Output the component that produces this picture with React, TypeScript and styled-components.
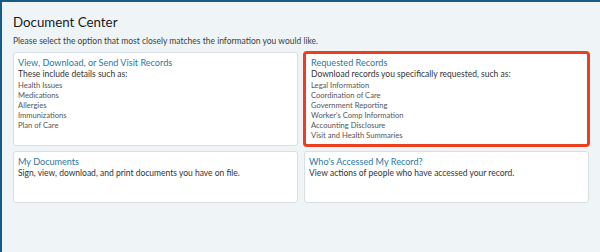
import styled, { createGlobalStyle } from "styled-components"

const GlobalStyle = createGlobalStyle`
    html, body {
        margin: 0;
        padding: 0;
        background-color: #eff4f7;
    }
    * {
        box-sizing: border-box;
    }
`

const Page = styled.div`
    height: 252px;
    border-top: solid 2px #1c5a86;
    border-left: solid 2px #1c5a86;
    background-color: #eff4f7;
    padding: 12px 11px 0 11px;
    font-family: Lato, "Open Sans", sans-serif;
    color: #222222;
`

const Title = styled.h1`
    margin: 0;
    font-size: 13.3px;
    font-weight: 400;
    line-height: 16px;
    color: #1a1a1a;
`

const Intro = styled.p`
    margin: 5px 0 0 0;
    font-size: 8.5px;
    line-height: 12px;
    color: #404040;
`

const Grid = styled.div`
    display: grid;
    grid-template-columns: 1fr 1fr;
    grid-template-rows: 94px 52px;
    column-gap: 6px;
    row-gap: 5px;
    margin-top: 5px;
`

const Card = styled.div<{ $selected?: boolean }>`
    background-color: #ffffff;
    border: solid 1px #d9dee2;
    border-radius: 3px;
    padding: 4px 4px;
    display: flex;
    flex-direction: column;
    outline: ${(props) => props.$selected ? 'solid 3px #ec3f20' : 'none'};
    outline-offset: -2px;
    padding-left: ${(props) => props.$selected ? '6px' : '4px'};
`

const CardTitle = styled.a`
    font-size: 9.1px;
    line-height: 12px;
    color: #2a78a5;
    text-decoration: none;
    cursor: pointer;
`

const CardText = styled.div`
    font-size: 8.5px;
    line-height: 11px;
    color: #333333;
`

const ItemList = styled.ul`
    list-style: none;
    margin: 0;
    padding: 0;
`

const Item = styled.li`
    font-size: 7.6px;
    line-height: 10px;
    color: #555555;
`

interface OptionProps {
    title: string;
    text: string;
    items?: string[];
    selected?: boolean;
}

function Option(props: OptionProps) {
    return (
        <Card $selected={props.selected}>
            <CardTitle>{props.title}</CardTitle>
            <CardText>{props.text}</CardText>
            {props.items && (
                <ItemList>
                    {props.items.map(item => <Item key={item}>{item}</Item>)}
                </ItemList>
            )}
        </Card>
    )
}

export default function App() {
    return (
        <>
            <GlobalStyle />
            <Page>
                <Title>Document Center</Title>
                <Intro>Please select the option that most closely matches the information you would like.</Intro>
                <Grid>
                    <Option
                        title="View, Download, or Send Visit Records"
                        text="These include details such as:"
                        items={['Health Issues', 'Medications', 'Allergies', 'Immunizations', 'Plan of Care']}
                    />
                    <Option
                        selected
                        title="Requested Records"
                        text="Download records you specifically requested, such as:"
                        items={['Legal Information', 'Coordination of Care', 'Government Reporting', "Worker's Comp Information", 'Accounting Disclosure', 'Visit and Health Summaries']}
                    />
                    <Option
                        title="My Documents"
                        text="Sign, view, download, and print documents you have on file."
                    />
                    <Option
                        title="Who's Accessed My Record?"
                        text="View actions of people who have accessed your record."
                    />
                </Grid>
            </Page>
        </>
    )
}
